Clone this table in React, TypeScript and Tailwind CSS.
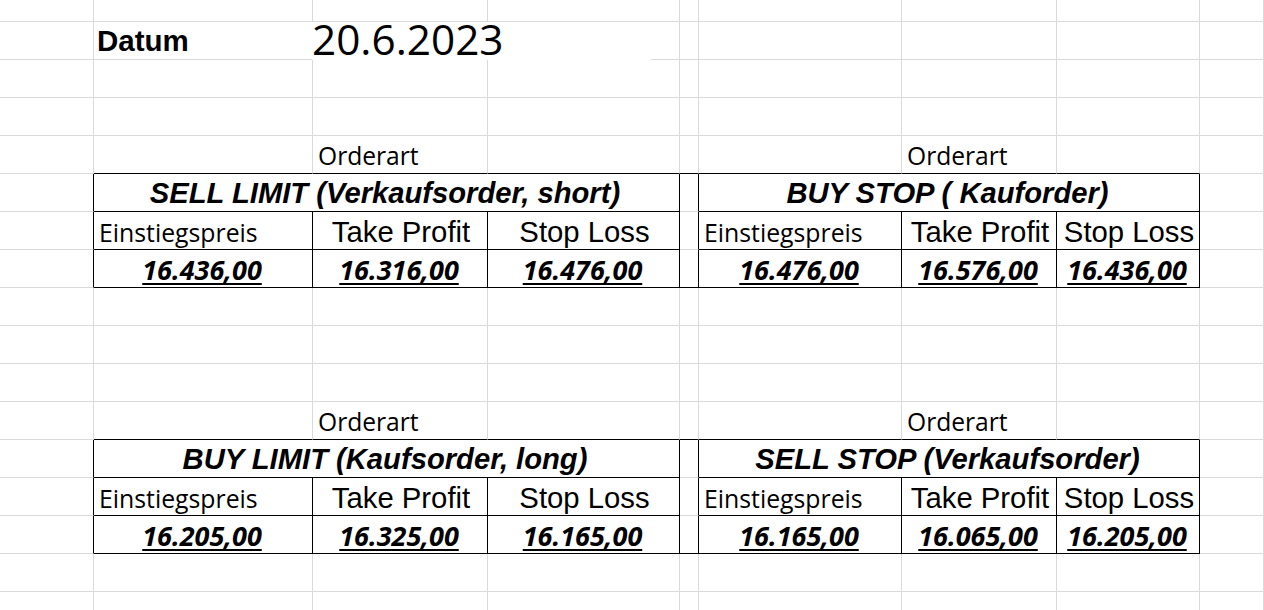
import React from 'react';

// Spaltenbreiten wie im Excel-Blatt (Rasterlinie liegt jeweils am rechten Rand)
const ROWS = 17;
const COLS = 9;

type Order = {
  title: string;
  entry: string;
  tp: string;
  sl: string;
};

const orders: Order[] = [
  { title: 'SELL LIMIT (Verkaufsorder, short)', entry: '16.436,00', tp: '16.316,00', sl: '16.476,00' },
  { title: 'BUY STOP ( Kauforder)', entry: '16.476,00', tp: '16.576,00', sl: '16.436,00' },
  { title: 'BUY LIMIT (Kaufsorder, long)', entry: '16.205,00', tp: '16.325,00', sl: '16.165,00' },
  { title: 'SELL STOP (Verkaufsorder)', entry: '16.165,00', tp: '16.065,00', sl: '16.205,00' },
];

const arial = "font-['Liberation_Sans',Arial,sans-serif]";
const calibri = "font-['Open_Sans','Noto_Sans',sans-serif]";

function isTableRow(r: number) {
  return (r >= 5 && r <= 7) || (r >= 12 && r <= 14);
}

function isTitleRow(r: number) {
  return r === 5 || r === 12;
}

function blackBottom(r: number, c: number) {
  const topEdge = r === 4 || r === 11;
  const tableCol = (c >= 1 && c <= 3) || (c >= 5 && c <= 7);
  if (!(isTableRow(r) || topEdge)) return false;
  if (tableCol) return true;
  return c === 4 && (topEdge || r === 7 || r === 14);
}

function blackRight(r: number, c: number) {
  if (!isTableRow(r)) return false;
  if (c === 0 || c === 3 || c === 4 || c === 7) return true;
  if (c === 1 || c === 2 || c === 5 || c === 6) return !isTitleRow(r);
  return false;
}

function cellContent(r: number, c: number): React.ReactNode {
  if (r === 1 && c === 1) {
    return <span className={`${arial} text-[29.5px] font-bold leading-none pl-[3px] pb-[4px] text-black`}>Datum</span>;
  }
  // Blöcke: oben rows 4..7, unten rows 11..14
  const block = r >= 4 && r <= 7 ? 0 : r >= 11 && r <= 14 ? 1 : -1;
  if (block < 0) return null;
  const base = block === 0 ? 4 : 11;
  const side = c >= 1 && c <= 3 ? 0 : c >= 5 && c <= 7 ? 1 : -1;
  if (side < 0) return null;
  const order = orders[block * 2 + side];
  const k = side === 0 ? c - 1 : c - 5;
  const rr = r - base;

  if (rr === 0 && k === 1) {
    return <span className={`${calibri} text-[24.6px] leading-none pl-[5px] pb-[4px] text-black`}>Orderart</span>;
  }
  if (rr === 1 && k === 0) {
    return (
      <span className={`${arial} w-full pr-[3px] text-center text-[29.2px] font-bold italic leading-none pb-[3px] text-black`}>
        {order.title}
      </span>
    );
  }
  if (rr === 2) {
    if (k === 0) {
      return <span className={`${calibri} text-[24.8px] leading-none pl-[5px] pb-[4px] text-black`}>Einstiegspreis</span>;
    }
    return (
      <span className={`${arial} w-full pl-[2px] text-center text-[29.3px] leading-none pb-[3px] text-black`}>
        {k === 1 ? 'Take Profit' : 'Stop Loss'}
      </span>
    );
  }
  if (rr === 3) {
    const v = k === 0 ? order.entry : k === 1 ? order.tp : order.sl;
    return (
      <span
        className={`${calibri} w-full pr-[2px] text-center text-[27px] font-bold italic leading-none pb-[4px] text-black underline decoration-[2px] underline-offset-[3px]`}
      >
        {v}
      </span>
    );
  }
  return null;
}

export default function App() {
  const cells: React.ReactNode[] = [];

  for (let r = 0; r < ROWS; r++) {
    for (let c = 0; c < COLS; c++) {
      // Titelzeile ist über 3 Spalten verbunden
      if (isTitleRow(r) && (c === 2 || c === 3 || c === 6 || c === 7)) continue;
      const merged = isTitleRow(r) && (c === 1 || c === 5);
      const rb = merged ? true : blackRight(r, c);
      const bb = blackBottom(r, c);
      cells.push(
        <div
          key={`${r}-${c}`}
          className={`flex items-end overflow-visible whitespace-nowrap border-r border-b ${
            rb ? 'border-r-black' : 'border-r-[#dadada]'
          } ${bb ? 'border-b-black' : 'border-b-[#dadada]'} ${merged ? 'col-span-3' : ''}`}
        >
          {cellContent(r, c)}
        </div>
      );
    }
  }

  return (
    <div className="h-[610px] w-[1264px] overflow-hidden bg-white">
      <div className="relative grid grid-cols-[94px_219px_175px_192px_19px_203px_155px_143px_1fr] grid-rows-[22px_repeat(16,38px)]">
        {cells}

        {/* eingefügtes Datumsfeld, liegt über den Rasterlinien */}
        <div className="absolute left-[312px] top-[22px] h-[38px] w-[339px] bg-white">
          <span className={`${calibri} block text-[42.3px] leading-[34px] text-black`}>20.6.2023</span>
        </div>
      </div>
    </div>
  );
}
